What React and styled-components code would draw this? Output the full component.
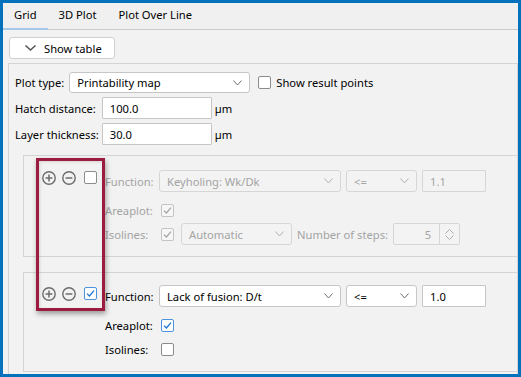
import React from "react";
import styled, { createGlobalStyle } from "styled-components";

const GlobalStyle = createGlobalStyle`
  html, body {
    margin: 0;
    padding: 0;
    background: #ffffff;
  }
  body {
    font-family: "Noto Sans", "Liberation Sans", sans-serif;
    font-size: 11.2px;
    color: #000;
  }
`;

const Frame = styled.div`
  position: relative;
  width: 521px;
  height: 377px;
  box-sizing: border-box;
  border: 3px solid #0471bd;
  background: #f2f2f2;
  overflow: hidden;
  display: flex;
  flex-direction: column;
`;

const TabBar = styled.div`
  display: flex;
  height: 27px;
  flex-shrink: 0;
  background: #f0f0f0;
  box-shadow: inset 0 -1px 0 #c9c9c9;
`;

const Tab = styled.div`
  display: flex;
  align-items: center;
  padding: 0 11px 4px;
  box-shadow: ${(p) => (p.$active ? "inset 0 -2px 0 #a6c8e9" : "none")};
`;

const Panel = styled.div`
  flex: 1;
  display: flex;
  flex-direction: column;
  padding: 7px 0 0 5px;
`;

const ShowButton = styled.div`
  display: flex;
  align-items: center;
  gap: 8px;
  width: 106px;
  height: 22px;
  box-sizing: border-box;
  margin-left: 1px;
  padding-left: 15px;
  background: #fff;
  border: 1px solid #d0d0d0;
  border-radius: 3px;
  color: #555;

  span {
    color: #000;
  }
`;

const Group = styled.div`
  flex: 1;
  margin-top: 4px;
  padding: 8px 0 0 6px;
  border: 1px solid #d4d4d4;
  border-bottom: none;
  display: flex;
  flex-direction: column;
`;

const TopRow = styled.div`
  display: flex;
  align-items: center;
  height: 21px;
`;

const FormGrid = styled.div`
  display: grid;
  grid-template-columns: auto 110px auto;
  grid-auto-rows: 22px;
  row-gap: 4px;
  column-gap: 3px;
  align-items: center;
  justify-content: start;
  margin-top: 4px;
`;

const Label = styled.span`
  color: ${(p) => (p.$disabled ? "#a3a3a3" : "#000")};
  white-space: nowrap;
  margin-left: ${(p) => p.$ml || 0}px;
  margin-right: ${(p) => p.$mr || 0}px;
`;

const SelectBox = styled.div`
  display: flex;
  align-items: center;
  justify-content: space-between;
  box-sizing: border-box;
  width: ${(p) => p.$w}px;
  height: ${(p) => p.$h || 22}px;
  padding: 0 7px;
  margin-left: ${(p) => p.$ml || 0}px;
  background: ${(p) => (p.$disabled ? "#f3f3f3" : "#fff")};
  border: 1px solid ${(p) => (p.$disabled ? "#d6d6d6" : "#c6c6c6")};
  border-radius: 3px;
  color: ${(p) => (p.$disabled ? "#a3a3a3" : "#000")};
  flex-shrink: 0;

  svg {
    color: ${(p) => (p.$disabled ? "#b0b0b0" : "#6f6f6f")};
  }
`;

const TextInput = styled.div`
  display: flex;
  align-items: center;
  box-sizing: border-box;
  width: ${(p) => (p.$w ? `${p.$w}px` : "auto")};
  height: 22px;
  padding: 0 7px;
  background: ${(p) => (p.$disabled ? "#f3f3f3" : "#fff")};
  border: 1px solid ${(p) => (p.$disabled ? "#d6d6d6" : "#c6c6c6")};
  border-radius: 1px;
  color: ${(p) => (p.$disabled ? "#a3a3a3" : "#000")};
  flex-shrink: 0;
`;

const Box = styled.div`
  display: flex;
  align-items: center;
  justify-content: center;
  width: 13px;
  height: 13px;
  box-sizing: border-box;
  flex-shrink: 0;
  margin-left: ${(p) => p.$ml || 0}px;
  margin-right: ${(p) => p.$mr || 0}px;
  border-radius: 2px;
  border: 1px solid
    ${(p) => (p.$disabled ? "#c4c4c4" : p.$checked ? "#4b93df" : "#8c8c8c")};
  background: ${(p) => (p.$disabled ? "#f6f6f6" : "#fff")};
  color: ${(p) => (p.$disabled ? "#a5a5a5" : "#1f76d2")};
`;

const Card = styled.div`
  display: flex;
  margin-left: 8px;
  margin-top: ${(p) => p.$mt}px;
  border: 1px solid #d4d4d4;
  border-right: none;
`;

const Tools = styled.div`
  display: flex;
  align-items: flex-start;
  width: 80px;
  box-sizing: border-box;
  padding: ${(p) => p.$top}px 0 0 18px;
  color: #6c6c6c;
  flex-shrink: 0;
`;

const ToolIcon = styled.svg`
  display: block;
  margin-right: ${(p) => p.$mr}px;
`;

const Fields = styled.div`
  display: flex;
  flex-direction: column;
  gap: 2px;
  padding: ${(p) => p.$top}px 0 11px;
`;

const FieldRow = styled.div`
  display: flex;
  align-items: center;
  gap: 5px;
  height: 22px;
  margin-bottom: ${(p) => p.$mb || 0}px;
`;

const FieldLabel = styled.span`
  width: 49px;
  padding-left: 1px;
  color: ${(p) => (p.$disabled ? "#a3a3a3" : "#000")};
  white-space: nowrap;
  flex-shrink: 0;
`;

const SpinBox = styled.div`
  display: flex;
  width: 67px;
  height: 22px;
  box-sizing: border-box;
  border: 1px solid #d6d6d6;
  border-radius: 2px;
  background: #f3f3f3;
  color: #a3a3a3;
`;

const SpinValue = styled.div`
  flex: 1;
  display: flex;
  align-items: center;
  justify-content: flex-end;
  padding-right: 8px;
`;

const SpinButtons = styled.div`
  width: 19px;
  border-left: 1px solid #d6d6d6;
  display: flex;
  flex-direction: column;
  align-items: center;
  justify-content: center;
  gap: 1px;
  color: #b0b0b0;
`;

const Highlight = styled.div`
  position: absolute;
  left: 33px;
  top: 155px;
  width: 69px;
  height: 153px;
  box-sizing: border-box;
  border: 3px solid #9b1c3e;
  box-shadow: 1px 3px 5px rgba(0, 0, 0, 0.35),
    inset 1px 1px 3px rgba(0, 0, 0, 0.12);
  pointer-events: none;
`;

const Chevron = ({ w = 9, h = 5, sw = 1 }) => (
  <svg width={w} height={h + 1} viewBox={`0 0 ${w} ${h + 1}`}>
    <path
      d={`M0.5 0.5 L${w / 2} ${h} L${w - 0.5} 0.5`}
      fill="none"
      stroke="currentColor"
      strokeWidth={sw}
    />
  </svg>
);

const Check = () => (
  <svg width="11" height="11" viewBox="0 0 11 11">
    <path
      d="M2 5.6 L4.4 8 L9 2.6"
      fill="none"
      stroke="currentColor"
      strokeWidth="1.3"
    />
  </svg>
);

const CheckBox = ({ checked, disabled, ml, mr }) => (
  <Box $checked={checked} $disabled={disabled} $ml={ml} $mr={mr}>
    {checked && <Check />}
  </Box>
);

const Select = ({ value, width, disabled, h, ml }) => (
  <SelectBox $w={width} $disabled={disabled} $h={h} $ml={ml}>
    <span>{value}</span>
    <Chevron />
  </SelectBox>
);

const PlusIcon = ({ mr }) => (
  <ToolIcon $mr={mr} width="14" height="14" viewBox="0 0 14 14">
    <circle cx="7" cy="7" r="6.2" fill="none" stroke="currentColor" strokeWidth="1.4" />
    <path d="M3.6 7 H10.4 M7 3.6 V10.4" stroke="currentColor" strokeWidth="1.5" />
  </ToolIcon>
);

const MinusIcon = ({ mr }) => (
  <ToolIcon $mr={mr} width="14" height="14" viewBox="0 0 14 14">
    <circle cx="7" cy="7" r="6.2" fill="none" stroke="currentColor" strokeWidth="1.4" />
    <path d="M3.6 7 H10.4" stroke="currentColor" strokeWidth="1.5" />
  </ToolIcon>
);

const FunctionCard = ({ mt, toolTop, fieldTop, enabled, fn, value, areaplot, isolines }) => (
  <Card $mt={mt}>
    <Tools $top={toolTop}>
      <PlusIcon mr={6} />
      <MinusIcon mr={8} />
      <CheckBox checked={enabled} />
    </Tools>
    <Fields $top={fieldTop}>
      <FieldRow $mb={5}>
        <FieldLabel $disabled={!enabled}>Function:</FieldLabel>
        <Select value={fn} width={182} disabled={!enabled} />
        <Select value="<=" width={71} disabled={!enabled} />
        <TextInput $w={64} $disabled={!enabled}>
          {value}
        </TextInput>
      </FieldRow>
      <FieldRow>
        <FieldLabel $disabled={!enabled}>Areaplot:</FieldLabel>
        <CheckBox checked={areaplot} disabled={!enabled} ml={2} />
      </FieldRow>
      <FieldRow>
        <FieldLabel $disabled={!enabled}>Isolines:</FieldLabel>
        <CheckBox checked={isolines} disabled={!enabled} ml={2} mr={2} />
        {!enabled && (
          <>
            <Select value="Automatic" width={111} disabled />
            <Label $disabled>Number of steps:</Label>
            <SpinBox>
              <SpinValue>5</SpinValue>
              <SpinButtons>
                <svg width="9" height="5" viewBox="0 0 9 5">
                  <path d="M0.5 4.5 L4.5 0.5 L8.5 4.5" fill="none" stroke="currentColor" />
                </svg>
                <svg width="9" height="5" viewBox="0 0 9 5">
                  <path d="M0.5 0.5 L4.5 4.5 L8.5 0.5" fill="none" stroke="currentColor" />
                </svg>
              </SpinButtons>
            </SpinBox>
          </>
        )}
      </FieldRow>
    </Fields>
  </Card>
);

function App() {
  return (
    <>
      <GlobalStyle />
      <Frame>
        <TabBar>
          <Tab $active>Grid</Tab>
          <Tab>3D Plot</Tab>
          <Tab>Plot Over Line</Tab>
        </TabBar>
        <Panel>
          <ShowButton>
            <Chevron w={11} h={5} sw={1.5} />
            <span>Show table</span>
          </ShowButton>
          <Group>
            <TopRow>
              <Label $mr={5}>Plot type:</Label>
              <Select value="Printability map" width={181} h={21} />
              <CheckBox ml={8} mr={5} />
              <Label>Show result points</Label>
            </TopRow>
            <FormGrid>
              <Label>Hatch distance:</Label>
              <TextInput>100.0</TextInput>
              <Label>µm</Label>
              <Label>Layer thickness:</Label>
              <TextInput>30.0</TextInput>
              <Label>µm</Label>
            </FormGrid>
            <FunctionCard
              mt={10}
              toolTop={15}
              fieldTop={14}
              enabled={false}
              fn="Keyholing: Wk/Dk"
              value="1.1"
              areaplot
              isolines
            />
            <FunctionCard
              mt={15}
              toolTop={14}
              fieldTop={12}
              enabled
              fn="Lack of fusion: D/t"
              value="1.0"
              areaplot
              isolines={false}
            />
          </Group>
        </Panel>
        <Highlight />
      </Frame>
    </>
  );
}

export default App;
